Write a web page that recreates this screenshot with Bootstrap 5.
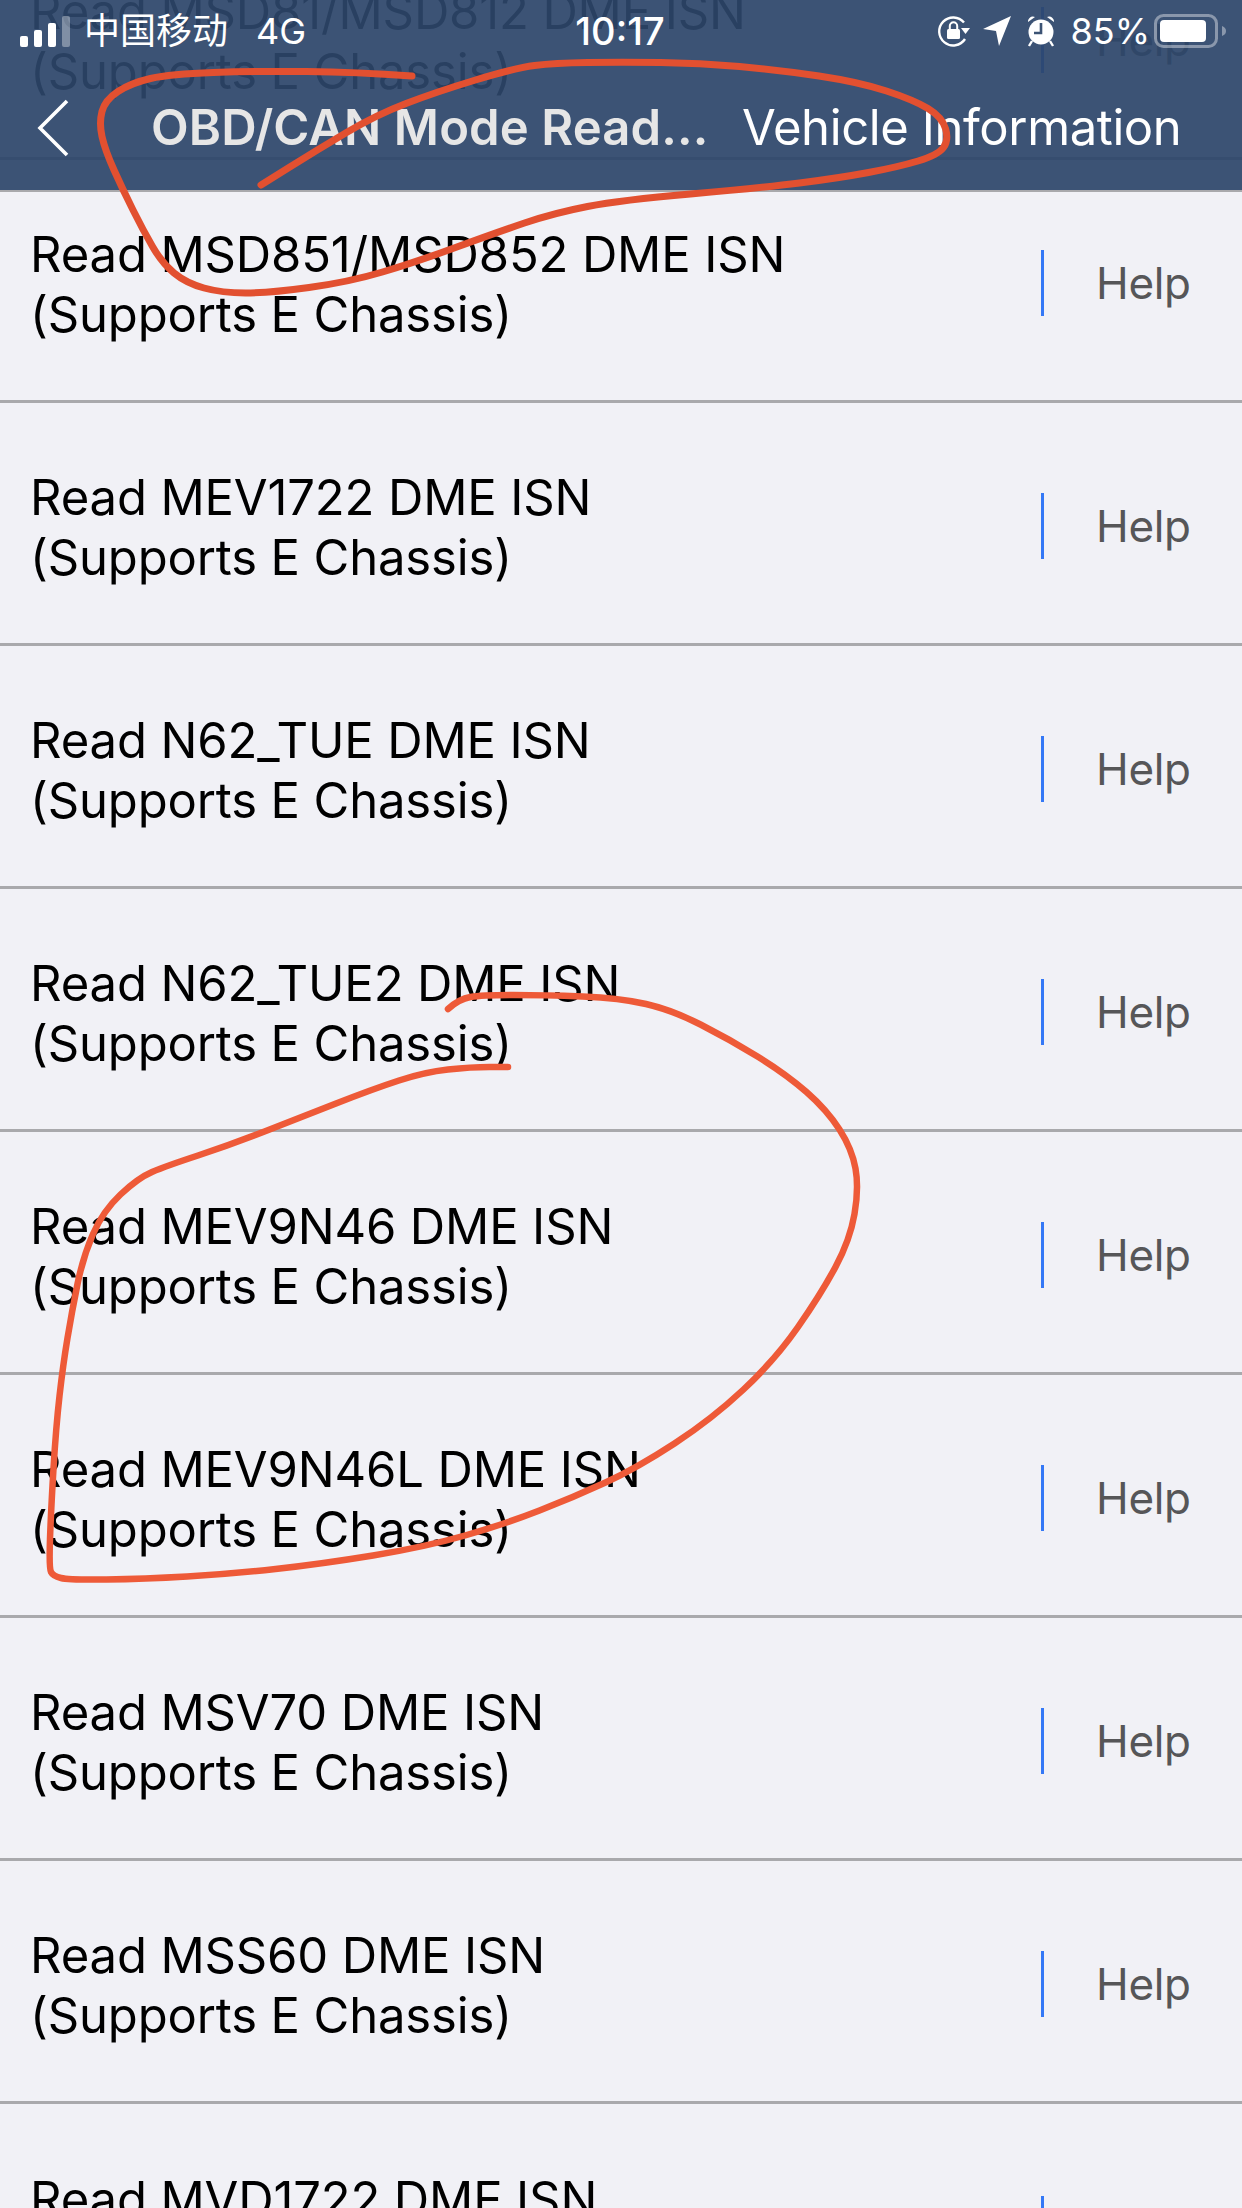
<!DOCTYPE html>
<html lang="en">
<head>
<meta charset="utf-8">
<title>Vehicle Information</title>
<link rel="stylesheet" href="https://cdn.jsdelivr.net/npm/bootstrap@5.3.0/dist/css/bootstrap.min.css">
<style>
html, body { margin: 0; background: #f1f1f6; }
.phone { width: 1242px; height: 2208px; overflow: hidden; position: relative; background: #f1f1f6; font-family: Inter, "Noto Sans CJK SC", sans-serif; color: #000; }
.isn-list { margin-top: -83px; --bs-list-group-bg: transparent; --bs-list-group-border-width: 3px; --bs-list-group-border-color: #a9a9ac; --bs-list-group-color: #000; }
.isn-row { height: 243px; padding: 6px 0 0 30px; flex-shrink: 0; }
.isn-label { font-size: 49px; line-height: 60px; letter-spacing: -.15px; white-space: nowrap; margin-top: 3px; }
.help-cell { width: 201px; height: 66px; border-left: 3px solid #3478f6; padding-left: 52px; font-size: 44px; line-height: 66px; color: #565658; letter-spacing: -.3px; }
.topbar { position: absolute; top: 0; left: 0; width: 1242px; height: 192px; background: rgba(44, 69, 105, .92); border-bottom: 2px solid #a9a9ac; color: #fff; }
.status-row { height: 62px; padding: 0 16px 0 20px; }
.status-side { flex: 1 1 0; }
.signal { width: 50px; height: 31px; }
.carrier { font-size: 36px; margin-left: 14px; line-height: 62px; }
.net { font-size: 36px; margin-left: 28px; line-height: 62px; }
.clock { font-size: 38px; font-weight: 500; line-height: 60px; margin-right: 6px; }
.loc-gap { margin-left: 12px; }
.batt-pct { font-size: 36px; margin: 0 4px 0 15px; line-height: 62px; }
.nav-row { height: 128px; padding: 3px 0 0 37px; }
.nav-title { margin-left: 82px; width: 591px; font-size: 49px; font-weight: 600; color: #e6e6e6; white-space: nowrap; letter-spacing: .1px; }
.nav-sub { font-size: 49px; white-space: nowrap; letter-spacing: -.4px; }
.ink { position: absolute; top: 0; left: 0; width: 1242px; height: 2208px; pointer-events: none; }
.ink path { fill: none; stroke-linecap: round; stroke-linejoin: round; }
</style>
</head>
<body>
<div class="phone">
  <div class="list-group list-group-flush isn-list">
    <div class="list-group-item d-flex align-items-center isn-row"><div class="flex-grow-1 isn-label">Read MSD81/MSD812 DME ISN<br>(Supports E Chassis)</div><div class="help-cell">Help</div></div>
    <div class="list-group-item d-flex align-items-center isn-row"><div class="flex-grow-1 isn-label">Read MSD851/MSD852 DME ISN<br>(Supports E Chassis)</div><div class="help-cell">Help</div></div>
    <div class="list-group-item d-flex align-items-center isn-row"><div class="flex-grow-1 isn-label">Read MEV1722 DME ISN<br>(Supports E Chassis)</div><div class="help-cell">Help</div></div>
    <div class="list-group-item d-flex align-items-center isn-row"><div class="flex-grow-1 isn-label">Read N62_TUE DME ISN<br>(Supports E Chassis)</div><div class="help-cell">Help</div></div>
    <div class="list-group-item d-flex align-items-center isn-row"><div class="flex-grow-1 isn-label">Read N62_TUE2 DME ISN<br>(Supports E Chassis)</div><div class="help-cell">Help</div></div>
    <div class="list-group-item d-flex align-items-center isn-row"><div class="flex-grow-1 isn-label">Read MEV9N46 DME ISN<br>(Supports E Chassis)</div><div class="help-cell">Help</div></div>
    <div class="list-group-item d-flex align-items-center isn-row"><div class="flex-grow-1 isn-label">Read MEV9N46L DME ISN<br>(Supports E Chassis)</div><div class="help-cell">Help</div></div>
    <div class="list-group-item d-flex align-items-center isn-row"><div class="flex-grow-1 isn-label">Read MSV70 DME ISN<br>(Supports E Chassis)</div><div class="help-cell">Help</div></div>
    <div class="list-group-item d-flex align-items-center isn-row"><div class="flex-grow-1 isn-label">Read MSS60 DME ISN<br>(Supports E Chassis)</div><div class="help-cell">Help</div></div>
    <div class="list-group-item d-flex align-items-center isn-row"><div class="flex-grow-1 isn-label">Read MVD1722 DME ISN<br>(Supports E Chassis)</div><div class="help-cell">Help</div></div>
  </div>

  <div class="topbar">
    <div class="d-flex align-items-center status-row">
      <div class="d-flex align-items-center status-side">
        <svg class="signal" viewBox="0 0 50 31" aria-hidden="true">
          <rect x="0" y="20" width="8" height="11" rx="2" fill="#fff"/>
          <rect x="14" y="14" width="8" height="17" rx="2" fill="#fff"/>
          <rect x="28" y="7" width="8" height="24" rx="2" fill="#fff"/>
          <rect x="42" y="0" width="8" height="31" rx="2" fill="#fff" fill-opacity=".35"/>
        </svg>
        <span class="carrier">中国移动</span><span class="net">4G</span>
      </div>
      <div class="clock">10:17</div>
      <div class="d-flex align-items-center justify-content-end status-side">
        <svg width="34" height="34" viewBox="0 0 34 34" aria-hidden="true">
          <path d="M27 8.5A14 14 0 1 0 28 25" fill="none" stroke="#fff" stroke-width="2.4"/>
          <path d="M24 14h9l-4.500 6z" fill="#fff"/>
          <rect x="10" y="15" width="13" height="10" rx="1.500" fill="#fff"/>
          <path d="M12.800 15v-3a3.700 3.700 0 0 1 7.400 0v3" fill="none" stroke="#fff" stroke-width="2"/>
        </svg>
        <svg class="loc-gap" width="28" height="30" viewBox="0 0 28 30" aria-hidden="true">
          <path d="M28 0 16 30l-3-15L0 13z" fill="#fff"/>
        </svg>
        <svg class="ms-3" width="28" height="32" viewBox="0 0 28 32" aria-hidden="true">
          <circle cx="14" cy="17" r="12.500" fill="#fff"/>
          <path d="M14 8v10H7" fill="none" stroke="#3c5374" stroke-width="2.600"/>
          <path d="M1 7a5 5 0 0 1 7-5zM27 7a5 5 0 0 0-7-5z" fill="#fff"/>
          <path d="M5 26 2 31M23 26l3 5" stroke="#fff" stroke-width="2.400"/>
        </svg>
        <span class="batt-pct">85%</span>
        <svg width="72" height="34" viewBox="0 0 72 34" aria-hidden="true">
          <rect x="1.500" y="1.500" width="61" height="31" rx="8" fill="none" stroke="#fff" stroke-opacity=".4" stroke-width="3"/>
          <rect x="6" y="6" width="46" height="22" rx="4" fill="#fff"/>
          <path d="M68 12c3 1 4 3 4 5s-1 4-4 5z" fill="#fff" fill-opacity=".4"/>
        </svg>
      </div>
    </div>
    <div class="d-flex align-items-center nav-row">
      <svg width="32" height="58" viewBox="0 0 32 58" aria-hidden="true">
        <path d="M30 2 3 29l27 27" fill="none" stroke="#fff" stroke-width="3.600"/>
      </svg>
      <div class="nav-title">OBD/CAN Mode Read...</div>
      <div class="nav-sub">Vehicle Information</div>
    </div>
  </div>

  <svg class="ink" viewBox="0 0 1242 2208" aria-hidden="true">
    <path id="ink-a" stroke="#e25030" stroke-width="7"/>
    <path id="ink-b" stroke="#ee5a38" stroke-width="6.500"/>
  </svg>
</div>
<script src="https://cdn.jsdelivr.net/npm/bootstrap@5.3.0/dist/js/bootstrap.bundle.min.js"></script>
<script>
function smooth(p) {
  var d = "M" + p[0][0] + " " + p[0][1];
  for (var i = 1; i < p.length - 1; i++) {
    var mx = (p[i][0] + p[i + 1][0]) / 2, my = (p[i][1] + p[i + 1][1]) / 2;
    d += "Q" + p[i][0] + " " + p[i][1] + " " + mx + " " + my;
  }
  var l = p[p.length - 1];
  return d + "L" + l[0] + " " + l[1];
}
document.getElementById("ink-a").setAttribute("d", smooth([[412,76],[356,72],[257,71],[170,74],[131,83],[105,100],[99,123],[105,150],[123,190],[143,230],[162,263],[186,283],[222,293],[269,293],[349,282],[416,262],[495,233],[554,213],[621,200],[760,188],[839,178],[898,167],[938,155],[949,140],[942,117],[914,100],[859,82],[779,70],[700,63],[621,62],[554,63],[515,68],[436,92],[376,115],[317,150],[261,185]]));
document.getElementById("ink-b").setAttribute("d", smooth([[448,1009],[459,999],[482,995],[545,995],[620,998],[672,1010],[729,1039],[786,1074],[827,1110],[852,1149],[859,1188],[850,1240],[821,1294],[775,1360],[712,1419],[637,1468],[574,1497],[505,1524],[425,1547],[321,1564],[230,1574],[144,1579],[69,1580],[53,1576],[49,1568],[51,1510],[56,1427],[63,1365],[72,1311],[83,1257],[103,1211],[138,1178],[166,1166],[230,1145],[299,1118],[373,1089],[425,1072],[471,1067],[508,1067]]));
</script>
</body>
</html>
